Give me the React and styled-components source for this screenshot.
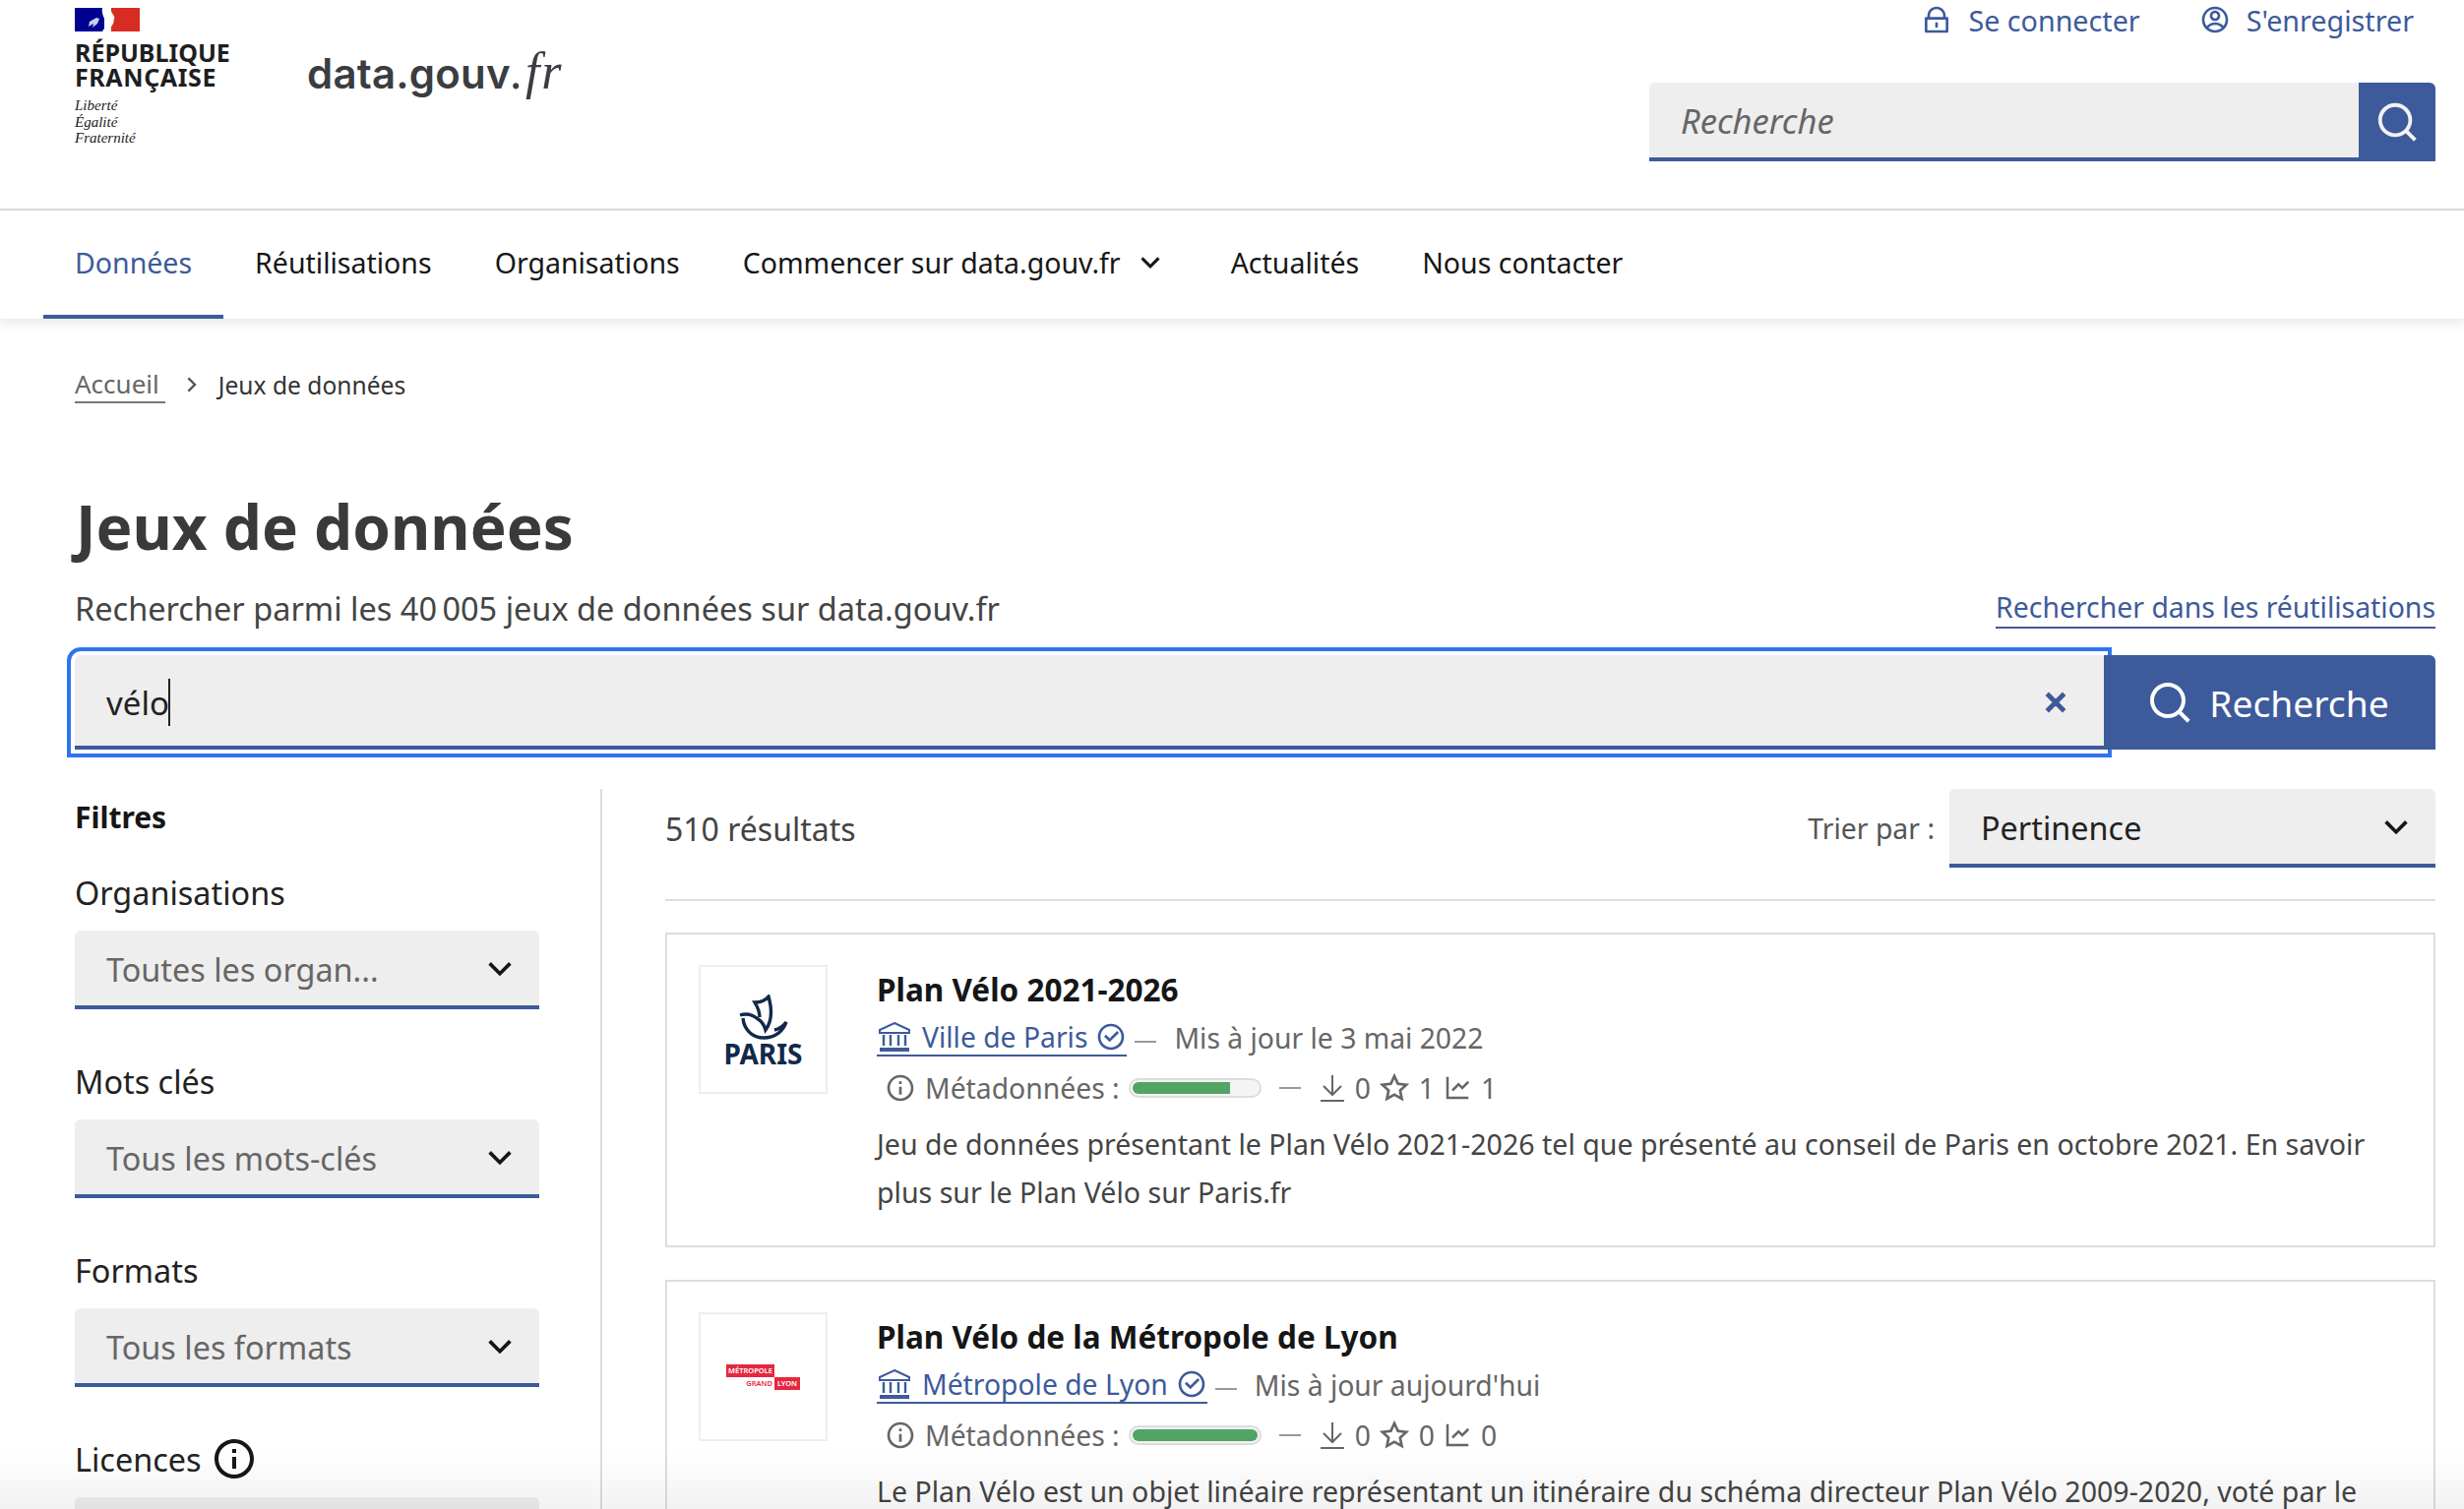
import React from 'react';
import styled, { createGlobalStyle } from 'styled-components';
import {
  RiLockLine,
  RiAccountCircleLine,
  RiSearchLine,
  RiArrowDownSLine,
  RiArrowRightSLine,
  RiCloseLine,
  RiCheckboxCircleLine,
  RiInformationLine,
  RiStarLine,
  RiLineChartLine,
} from 'react-icons/ri';

const BLUE = '#3d5a9b';
const FONT = '"Noto Sans", "Liberation Sans", sans-serif';

const GlobalStyle = createGlobalStyle`
  html, body {
    margin: 0;
    height: 100%;
    overflow: hidden;
    background: #fff;
    font-family: ${FONT};
    color: #161616;
  }
`;

const Page = styled.div`
  position: relative;
  height: 1534px;
  overflow: hidden;
`;

const BottomFade = styled.div`
  position: absolute;
  left: 0;
  right: 0;
  bottom: 0;
  height: 60px;
  background: linear-gradient(rgba(0, 0, 0, 0), rgba(0, 0, 0, 0.05));
  pointer-events: none;
  z-index: 3;
`;

const Header = styled.header`
  height: 212px;
  display: flex;
  justify-content: space-between;
  padding: 0 29px 0 76px;
  border-bottom: 2px solid #ddd;
`;

const Brand = styled.div`
  display: flex;
  align-items: flex-start;
  gap: 80px;
`;

const Marianne = styled.div`
  width: 156px;
  padding-top: 8px;
`;

const Flag = styled.svg`
  display: block;
  width: 66px;
  height: 24px;
`;

const RepublicName = styled.div`
  margin-top: 9px;
  font-size: 25px;
  line-height: 25px;
  font-weight: 700;
  letter-spacing: -0.3px;
  color: #1e1e1e;
`;

const RepublicLine = styled.span`
  display: block;
  letter-spacing: ${(p) => p.$spacing || 0}px;
`;

const Motto = styled.div`
  margin-top: 8px;
  font-family: "Liberation Serif", serif;
  font-style: italic;
  font-size: 15px;
  line-height: 16.5px;
  color: #222;
`;

const SiteName = styled.div`
  margin-top: 45px;
  font-family: Inter, sans-serif;
  font-size: 42px;
  line-height: 56px;
  font-weight: 600;
  letter-spacing: 0.2px;
  color: #3a3d42;
`;

const SiteSuffix = styled.span`
  font-family: "Liberation Serif", serif;
  font-style: italic;
  font-weight: 400;
  font-size: 52px;
  letter-spacing: 2px;
`;

const HeaderTools = styled.div`
  width: 799px;
`;

const TopLinks = styled.div`
  height: 40px;
  display: flex;
  justify-content: flex-end;
  align-items: center;
  gap: 60px;
  padding-right: 22px;
`;

const TopLink = styled.a`
  display: flex;
  align-items: center;
  gap: 16px;
  font-size: 28.7px;
  color: ${BLUE};
`;

const SmallSearch = styled.div`
  display: flex;
  height: 80px;
  margin-top: 44px;
`;

const SmallSearchField = styled.div`
  flex: 1;
  display: flex;
  align-items: center;
  padding: 0 32px;
  background: #eee;
  border-bottom: 4px solid ${BLUE};
  border-top-left-radius: 6px;
  font-size: 34.5px;
  font-style: italic;
  color: #666;
`;

const SmallSearchButton = styled.div`
  width: 78px;
  display: flex;
  align-items: center;
  justify-content: center;
  background: ${BLUE};
  border-top-right-radius: 6px;
  color: #f2f2f2;
`;

const Nav = styled.nav`
  height: 110px;
  display: flex;
  padding-left: 44px;
  box-shadow: 0 4px 10px rgba(0, 0, 0, 0.1);
  position: relative;
`;

const NavItem = styled.a`
  display: flex;
  align-items: center;
  gap: 12px;
  padding: 0 32px;
  font-size: 28.5px;
  color: ${(p) => (p.$active ? BLUE : '#161616')};
  border-bottom: 4px solid ${(p) => (p.$active ? BLUE : 'transparent')};
`;

const Main = styled.main`
  padding: 0 29px 0 76px;
`;

const Breadcrumb = styled.div`
  height: 40px;
  margin-top: 47px;
  display: flex;
  align-items: center;
  font-size: 24.6px;
`;

const Crumb = styled.a`
  font-size: 26px;
  color: #666;
  padding-right: 6px;
  border-bottom: 2px solid #777;
`;

const CrumbSeparator = styled.span`
  display: flex;
  width: 54px;
  justify-content: center;
  color: #555;
`;

const CrumbCurrent = styled.span`
  color: #333;
`;

const Title = styled.h1`
  margin: 86px 0 0 1px;
  font-size: 62px;
  line-height: 76px;
  font-weight: 700;
  color: #3a3a3a;
`;

const IntroRow = styled.div`
  height: 48px;
  margin-top: 21px;
  display: flex;
  justify-content: space-between;
  align-items: center;
`;

const Intro = styled.p`
  margin: 0;
  font-size: 32.5px;
  color: #444;
`;

const ReuseLink = styled.a`
  font-size: 28.4px;
  line-height: 40px;
  color: ${BLUE};
  border-bottom: 2px solid ${BLUE};
`;

const BigSearch = styled.div`
  display: flex;
  height: 96px;
  margin-top: 24px;
`;

const BigSearchField = styled.div`
  flex: 1;
  display: flex;
  align-items: center;
  justify-content: space-between;
  padding: 4px 32px 0 32px;
  background: #eee;
  border-bottom: 4px solid ${BLUE};
  border-top-left-radius: 6px;
  outline: 4px solid #2f74ee;
  outline-offset: 4px;
`;

const TypedValue = styled.div`
  display: flex;
  align-items: center;
  font-size: 33px;
  color: #222;
`;

const Caret = styled.span`
  width: 2px;
  height: 48px;
  margin-left: -1px;
  background: #222;
`;

const ClearButton = styled.span`
  display: flex;
  color: ${BLUE};
  stroke: ${BLUE};
`;

const BigSearchButton = styled.div`
  position: relative;
  width: 337px;
  display: flex;
  align-items: center;
  justify-content: center;
  gap: 16px;
  background: ${BLUE};
  border-top-right-radius: 6px;
  font-size: 37.2px;
  color: #fff;
  padding-right: 4px;
  box-sizing: border-box;
`;

const Columns = styled.div`
  display: flex;
  margin-top: 40px;
`;

const Filters = styled.aside`
  width: 472px;
  height: 800px;
  padding-right: 62px;
  border-right: 2px solid #ddd;
  flex-shrink: 0;
`;

const FiltersTitle = styled.div`
  height: 56px;
  margin-bottom: 29px;
  display: flex;
  align-items: center;
  font-size: 30px;
  font-weight: 700;
`;

const FilterGroup = styled.div`
  margin-bottom: 53px;
`;

const FilterLabel = styled.div`
  height: 40px;
  margin-bottom: 19px;
  display: flex;
  align-items: center;
  gap: 9px;
  font-size: 32.4px;
  color: #222;
`;

const Select = styled.div`
  height: 80px;
  box-sizing: border-box;
  display: flex;
  align-items: center;
  justify-content: space-between;
  padding: 2px 18px 0 32px;
  background: #eee;
  border-bottom: 4px solid ${BLUE};
  border-radius: 6px 6px 0 0;
  font-size: 32.4px;
  color: ${(p) => (p.$placeholder ? '#666' : '#222')};
`;

const Results = styled.section`
  flex: 1;
  min-width: 0;
  padding-left: 64px;
`;

const ResultsBar = styled.div`
  display: flex;
  align-items: center;
  justify-content: space-between;
  padding-bottom: 32px;
  border-bottom: 2px solid #ddd;
`;

const ResultCount = styled.div`
  font-size: 32px;
  color: #444;
`;

const Sort = styled.div`
  display: flex;
  align-items: center;
  gap: 15px;
`;

const SortLabel = styled.span`
  font-size: 28.4px;
  color: #555;
`;

const SortSelect = styled(Select)`
  width: 494px;
`;

const Card = styled.article`
  display: flex;
  height: 320px;
  box-sizing: border-box;
  margin-top: 33px;
  padding: 32px 32px 0;
  border: 2px solid #ddd;
  &:first-of-type {
    margin-top: 32px;
  }
`;

const LogoBox = styled.div`
  width: 131px;
  height: 131px;
  box-sizing: border-box;
  flex-shrink: 0;
  margin: -1px 50px 0 0;
  display: flex;
  flex-direction: column;
  align-items: center;
  justify-content: center;
  border: 2px solid #eee;
`;

const ParisText = styled.div`
  font-size: 28px;
  line-height: 24px;
  margin-top: 2px;
  font-weight: 700;
  color: #12294a;
`;

const LyonLogo = styled.div`
  width: 75px;
  display: grid;
  grid-template-columns: 49px 26px;
  grid-template-rows: 13px 13px;
  font-size: 7.5px;
  line-height: 13px;
  font-weight: 600;
  text-align: center;
`;

const LyonCell = styled.span`
  background: ${(p) => (p.$plain ? 'transparent' : '#e5283f')};
  color: ${(p) => (p.$plain ? '#e5283f' : '#fff')};
  ${(p) => p.$plain && 'text-align: right; padding-right: 2px;'}
`;

const CardBody = styled.div`
  flex: 1;
  min-width: 0;
`;

const CardTitle = styled.h2`
  margin: 0;
  font-size: 31.5px;
  line-height: 48px;
  font-weight: 700;
  color: #161616;
`;

const OrgRow = styled.div`
  height: 48px;
  margin-top: 1px;
  display: flex;
  align-items: center;
  font-size: 28.3px;
  color: #666;
`;

const OrgLink = styled.a`
  display: flex;
  align-items: center;
  gap: 8px;
  color: ${BLUE};
  border-bottom: 2px solid ${BLUE};
  line-height: 36px;
`;

const BankIcon = styled.svg`
  width: 36px;
  height: 32px;
  margin-right: 2px;
  flex-shrink: 0;
`;

const Dash = styled.span`
  width: 22px;
  height: 2px;
  margin: 8px 18px 0 8px;
  background: #999;
`;

const MetaRow = styled.div`
  height: 48px;
  margin-top: 3px;
  display: flex;
  align-items: center;
  padding-left: 8px;
  font-size: 28.3px;
  color: #666;
`;

const MetaLabel = styled.span`
  margin: 0 9px 0 9px;
`;

const QualityBar = styled.div`
  width: 135px;
  height: 20px;
  box-sizing: border-box;
  padding: 2px;
  border: 2px solid #ddd;
  border-radius: 10px;
  background: #f4f4f4;
  overflow: hidden;
`;

const QualityFill = styled.div`
  height: 100%;
  background: #52a464;
  border-radius: ${(p) => (p.$full ? '8px' : '8px 0 0 8px')};
`;

const MetaDash = styled.span`
  width: 22px;
  height: 2px;
  margin: 0 18px;
  background: #999;
`;

const Stat = styled.span`
  display: flex;
  align-items: center;
  gap: 9px;
  margin-right: 8px;
`;

const Description = styled.p`
  margin: 8px 0 0;
  font-size: 28.55px;
  line-height: 49px;
  color: #444;
`;

const DownloadIcon = () => (
  <svg width="28" height="30" viewBox="0 0 28 30" fill="none" stroke="currentColor" strokeWidth="2">
    <path d="M14 2v19M5 13l9 9 9-9M2 28h24" />
  </svg>
);

const GovernmentIcon = () => (
  <BankIcon viewBox="0 0 36 32" fill="none" stroke="currentColor" strokeWidth="2">
    <path d="M18 2 33 9v3H3V9z" />
    <path d="M7 14v11M14 14v11M22 14v11M29 14v11" strokeWidth="2.4" />
    <path d="M3 29h30" strokeWidth="4" />
  </BankIcon>
);

const FlagMark = () => (
  <Flag viewBox="0 0 66 24">
    <rect width="30" height="24" fill="#000091" />
    <rect x="30" width="8" height="24" fill="#fff" />
    <rect x="37" width="29" height="24" fill="#d62c24" />
    <path d="M28 0h9c-1 3 1 5 2 7 1 2 2 3 1 4-1 2 0 3-1 5-2 3-3 5-4 8h-7c3-4 4-8 3-11-2-4-4-9-3-13z" fill="#fff" />
    <path d="M15 14l7-4 3 1-2 5-5 4 1-4-5 3z" fill="#c9d0ef" />
  </Flag>
);

const ParisLogo = () => (
  <svg width="52" height="46" viewBox="0 0 52 46" fill="none" stroke="#12294a" strokeWidth="3.4">
    <path d="M5 24c1 11 9 20 21 20 12 0 20-7 23-16-3 4-7 7-12 8" />
    <path d="M2 21c6-2 12-1 17 3 5 3 8 8 9 12 6-8 7-20 3-34-4 5-10 6-14 6 3 5 5 10 5 15" />
  </svg>
);

const filters = [
  { label: 'Organisations', value: 'Toutes les organ...' },
  { label: 'Mots clés', value: 'Tous les mots-clés' },
  { label: 'Formats', value: 'Tous les formats' },
];

const chevron = <RiArrowDownSLine size={44} color="#161616" />;

export default function App() {
  return (
    <Page>
      <GlobalStyle />
      <Header>
        <Brand>
          <Marianne>
            <FlagMark />
            <RepublicName>
              <RepublicLine>RÉPUBLIQUE</RepublicLine>
              <RepublicLine $spacing={0.6}>FRANÇAISE</RepublicLine>
            </RepublicName>
            <Motto>
              Liberté
              <br />
              Égalité
              <br />
              Fraternité
            </Motto>
          </Marianne>
          <SiteName>
            data.gouv<SiteSuffix>.fr</SiteSuffix>
          </SiteName>
        </Brand>
        <HeaderTools>
          <TopLinks>
            <TopLink>
              <RiLockLine size={32} />
              Se connecter
            </TopLink>
            <TopLink>
              <RiAccountCircleLine size={32} />
              S'enregistrer
            </TopLink>
          </TopLinks>
          <SmallSearch>
            <SmallSearchField>Recherche</SmallSearchField>
            <SmallSearchButton>
              <RiSearchLine size={46} />
            </SmallSearchButton>
          </SmallSearch>
        </HeaderTools>
      </Header>

      <Nav>
        <NavItem $active>Données</NavItem>
        <NavItem>Réutilisations</NavItem>
        <NavItem>Organisations</NavItem>
        <NavItem>
          Commencer sur data.gouv.fr
          <RiArrowDownSLine size={36} />
        </NavItem>
        <NavItem>Actualités</NavItem>
        <NavItem>Nous contacter</NavItem>
      </Nav>

      <Main>
        <Breadcrumb>
          <Crumb>Accueil</Crumb>
          <CrumbSeparator>
            <RiArrowRightSLine size={28} />
          </CrumbSeparator>
          <CrumbCurrent>Jeux de données</CrumbCurrent>
        </Breadcrumb>

        <Title>Jeux de données</Title>

        <IntroRow>
          <Intro>Rechercher parmi les 40{'\u202f'}005 jeux de données sur data.gouv.fr</Intro>
          <ReuseLink>Rechercher dans les réutilisations</ReuseLink>
        </IntroRow>

        <BigSearch>
          <BigSearchField>
            <TypedValue>
              vélo
              <Caret />
            </TypedValue>
            <ClearButton>
              <RiCloseLine size={34} strokeWidth={1.4} />
            </ClearButton>
          </BigSearchField>
          <BigSearchButton>
            <RiSearchLine size={48} />
            Recherche
          </BigSearchButton>
        </BigSearch>

        <Columns>
          <Filters>
            <FiltersTitle>Filtres</FiltersTitle>
            {filters.map((f) => (
              <FilterGroup key={f.label}>
                <FilterLabel>{f.label}</FilterLabel>
                <Select $placeholder>
                  {f.value}
                  {chevron}
                </Select>
              </FilterGroup>
            ))}
            <FilterGroup>
              <FilterLabel>
                Licences
                <RiInformationLine size={48} color="#161616" />
              </FilterLabel>
              <Select />
            </FilterGroup>
          </Filters>

          <Results>
            <ResultsBar>
              <ResultCount>510 résultats</ResultCount>
              <Sort>
                <SortLabel>Trier par :</SortLabel>
                <SortSelect>
                  Pertinence
                  {chevron}
                </SortSelect>
              </Sort>
            </ResultsBar>

            <Card>
              <LogoBox>
                <ParisLogo />
                <ParisText>PARIS</ParisText>
              </LogoBox>
              <CardBody>
                <CardTitle>Plan Vélo 2021-2026</CardTitle>
                <OrgRow>
                  <OrgLink>
                    <GovernmentIcon />
                    Ville de Paris
                    <RiCheckboxCircleLine size={32} />
                  </OrgLink>
                  <Dash />
                  Mis à jour le 3 mai 2022
                </OrgRow>
                <MetaRow>
                  <RiInformationLine size={32} />
                  <MetaLabel>Métadonnées :</MetaLabel>
                  <QualityBar>
                    <QualityFill style={{ width: '78%' }} />
                  </QualityBar>
                  <MetaDash />
                  <Stat>
                    <DownloadIcon />0
                  </Stat>
                  <Stat>
                    <RiStarLine size={32} />1
                  </Stat>
                  <Stat>
                    <RiLineChartLine size={30} />1
                  </Stat>
                </MetaRow>
                <Description>
                  Jeu de données présentant le Plan Vélo 2021-2026 tel que présenté au conseil de Paris en octobre 2021. En savoir
                  <br />
                  plus sur le Plan Vélo sur Paris.fr
                </Description>
              </CardBody>
            </Card>

            <Card>
              <LogoBox>
                <LyonLogo>
                  <LyonCell>MÉTROPOLE</LyonCell>
                  <span />
                  <LyonCell $plain>GRAND</LyonCell>
                  <LyonCell>LYON</LyonCell>
                </LyonLogo>
              </LogoBox>
              <CardBody>
                <CardTitle>Plan Vélo de la Métropole de Lyon</CardTitle>
                <OrgRow>
                  <OrgLink>
                    <GovernmentIcon />
                    Métropole de Lyon
                    <RiCheckboxCircleLine size={32} />
                  </OrgLink>
                  <Dash />
                  Mis à jour aujourd'hui
                </OrgRow>
                <MetaRow>
                  <RiInformationLine size={32} />
                  <MetaLabel>Métadonnées :</MetaLabel>
                  <QualityBar>
                    <QualityFill $full style={{ width: '100%' }} />
                  </QualityBar>
                  <MetaDash />
                  <Stat>
                    <DownloadIcon />0
                  </Stat>
                  <Stat>
                    <RiStarLine size={32} />0
                  </Stat>
                  <Stat>
                    <RiLineChartLine size={30} />0
                  </Stat>
                </MetaRow>
                <Description>
                  Le Plan Vélo est un objet linéaire représentant un itinéraire du schéma directeur Plan Vélo 2009-2020, voté par le
                </Description>
              </CardBody>
            </Card>
          </Results>
        </Columns>
      </Main>
      <BottomFade />
    </Page>
  );
}
